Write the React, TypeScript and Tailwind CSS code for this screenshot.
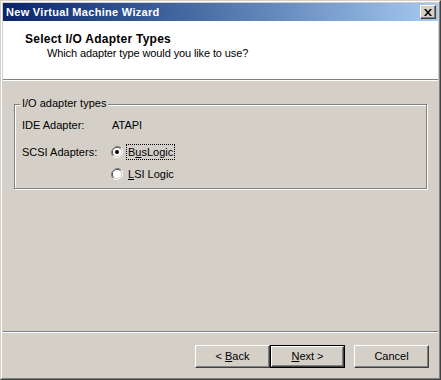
import React from 'react'

function Radio({ checked }: { checked?: boolean }) {
  return (
    <svg width="12" height="12" viewBox="0 0 12 12" className="shrink-0">
      {/* outer ring: shadow top-left, highlight bottom-right */}
      <path d="M10.2 1.8 A6 6 0 0 0 1.8 10.2" fill="none" stroke="#808080" strokeWidth="1" />
      <path d="M1.8 10.2 A6 6 0 0 0 10.2 1.8" fill="none" stroke="#ffffff" strokeWidth="1" />
      <path d="M9.5 2.5 A5 5 0 0 0 2.5 9.5" fill="none" stroke="#404040" strokeWidth="1" />
      <path d="M2.5 9.5 A5 5 0 0 0 9.5 2.5" fill="none" stroke="#d4d0c8" strokeWidth="1" />
      <circle cx="6" cy="6" r="4" fill="#ffffff" />
      {checked && <circle cx="6" cy="6" r="2" fill="#000000" />}
    </svg>
  )
}

function Button({ children, isDefault }: { children: React.ReactNode; isDefault?: boolean }) {
  const face = (
    <div className="flex-1 flex items-center justify-center border border-t-white border-l-white border-r-[#404040] border-b-[#404040] shadow-[inset_-1px_-1px_0_#808080] bg-[#d4d0c8]">
      {children}
    </div>
  )
  return isDefault ? (
    <div className="w-[75px] h-[23px] flex border border-black">{face}</div>
  ) : (
    <div className="w-[75px] h-[23px] flex">{face}</div>
  )
}

export default function App() {
  return (
    <div className="w-[441px] h-[380px] font-['Liberation_Sans',Arial,sans-serif] text-[11px] text-black bg-[#d4d0c8] border border-t-[#d4d0c8] border-l-[#d4d0c8] border-r-[#404040] border-b-[#404040]">
      <div className="h-full flex flex-col p-px border border-t-white border-l-white border-r-[#808080] border-b-[#808080]">
        {/* Title bar */}
        <div className="h-[18px] shrink-0 flex items-center justify-between pl-[3px] pr-[2px] bg-gradient-to-r from-[#0a246a] to-[#a6caf0]">
          <span className="font-bold text-white leading-[13px] tracking-[0.3px]">New Virtual Machine Wizard</span>
          <div className="w-[16px] h-[14px] flex items-center justify-center bg-[#d4d0c8] border border-t-white border-l-white border-r-[#404040] border-b-[#404040] shadow-[inset_-1px_-1px_0_#808080]">
            <svg width="8" height="7" viewBox="0 0 8 7">
              <path d="M0 0h2l2 2.5L6 0h2L5 3.5 8 7H6L4 4.5 2 7H0l3-3.5z" fill="#000" />
            </svg>
          </div>
        </div>

        {/* Header */}
        <div className="h-[58px] shrink-0 bg-white pt-[11px]">
          <div className="pl-[22px] font-bold text-[12px] leading-[14px] tracking-[0.25px]">Select I/O Adapter Types</div>
          <div className="pl-[44px] mt-px leading-[13px] tracking-[-0.12px]">Which adapter type would you like to use?</div>
        </div>
        <div className="h-px shrink-0 bg-[#808080]" />
        <div className="h-px shrink-0 bg-white" />

        {/* Body */}
        <div className="h-[250px] shrink-0 px-[11px] pt-[23px]">
          <div className="relative h-[85px] border border-[#808080] shadow-[1px_1px_0_#ffffff,inset_1px_1px_0_#ffffff]">
            <span className="absolute left-[5px] -top-[8px] px-[2px] bg-[#d4d0c8] leading-[13px]">I/O adapter types</span>
            <div className="pt-[14px] pl-[7px] flex flex-col">
              <div className="h-[13px] flex items-center leading-[13px]">
                <span className="w-[90px]">IDE Adapter:</span>
                <span>ATAPI</span>
              </div>
              <div className="h-[22px] mt-[9px] flex items-center">
                <span className="w-[89px] leading-[13px]">SCSI Adapters:</span>
                <Radio checked />
                <span className="ml-[3px] px-px leading-[14px] border border-dotted border-black">
                  B<span className="underline">u</span>sLogic
                </span>
              </div>
              <div className="h-[22px] flex items-center">
                <span className="w-[89px]" />
                <Radio />
                <span className="ml-[3px] px-px leading-[14px] border border-transparent">
                  <span className="underline">L</span>SI Logic
                </span>
              </div>
            </div>
          </div>
        </div>

        <div className="h-px shrink-0 bg-[#808080]" />
        <div className="h-px shrink-0 bg-white" />

        {/* Footer */}
        <div className="flex-1 flex justify-end items-start pt-[12px] pr-[9px]">
          <Button>
            &lt; <span className="underline ml-[3px]">B</span>ack
          </Button>
          <Button isDefault>
            <span className="underline">N</span>ext &gt;
          </Button>
          <div className="w-[9px]" />
          <Button>Cancel</Button>
        </div>
      </div>
    </div>
  )
}
